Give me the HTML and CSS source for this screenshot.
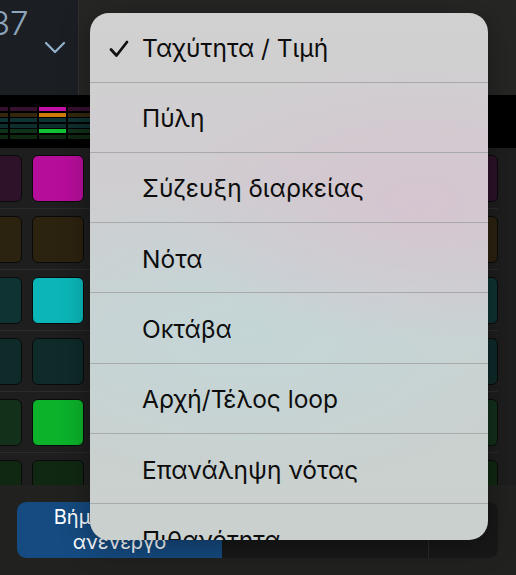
FILE: index.html
```html
<!DOCTYPE html>
<html lang="el">
<head>
    <meta charset="UTF-8">
    <title>Step Sequencer</title>
    <link rel="stylesheet" href="styles.css">
</head>
<body>
    <div class="app">
        <div class="top-bar">
            <div class="pattern-panel">
                <span class="pattern-number">37</span>
                <svg class="chevron" width="22" height="13" viewBox="0 0 22 13">
                    <path d="M2 2 L11 11 L20 2" fill="none" stroke="#93b2cc" stroke-width="2.2" stroke-linecap="round" stroke-linejoin="round"/>
                </svg>
            </div>
            <div class="top-rest"></div>
        </div>

        <div class="overview">
            <div class="mini-row magenta"><i></i><i></i><i class="on"></i><i></i><i></i><i></i><i></i><i></i><i></i><i></i><i></i><i></i><i></i><i></i><i></i><i></i></div>
            <div class="mini-row orange"><i></i><i></i><i class="on"></i><i></i><i></i><i></i><i></i><i></i><i></i><i></i><i></i><i></i><i></i><i></i><i></i><i></i></div>
            <div class="mini-row cyan"><i></i><i></i><i></i><i></i><i></i><i></i><i></i><i></i><i></i><i></i><i></i><i></i><i></i><i></i><i></i><i></i></div>
            <div class="mini-row teal"><i></i><i></i><i></i><i></i><i></i><i></i><i></i><i></i><i></i><i></i><i></i><i></i><i></i><i></i><i></i><i></i></div>
            <div class="mini-row green"><i></i><i></i><i class="on"></i><i></i><i></i><i></i><i></i><i></i><i></i><i></i><i></i><i></i><i></i><i></i><i></i><i></i></div>
            <div class="mini-row forest"><i></i><i></i><i></i><i></i><i></i><i></i><i></i><i></i><i></i><i></i><i></i><i></i><i></i><i></i><i></i><i></i></div>
        </div>

        <div class="pad-grid">
            <div class="pad-row magenta"><b></b><b class="on"></b><b></b><b></b><b></b><b></b><b></b><b></b></div>
            <div class="pad-row orange"><b></b><b></b><b></b><b></b><b></b><b></b><b></b><b></b></div>
            <div class="pad-row cyan"><b></b><b class="on"></b><b></b><b></b><b></b><b></b><b></b><b></b></div>
            <div class="pad-row teal"><b></b><b></b><b></b><b></b><b></b><b></b><b></b><b></b></div>
            <div class="pad-row green"><b></b><b class="on"></b><b></b><b></b><b></b><b></b><b></b><b></b></div>
            <div class="pad-row forest"><b></b><b></b><b></b><b></b><b></b><b></b><b></b><b></b></div>
        </div>

        <div class="bottom-bar">
            <div class="segmented">
                <div class="segment active">Βήμα ενεργό/<br>ανενεργό</div>
                <div class="segment"></div>
                <div class="segment small"></div>
            </div>
        </div>
    </div>

    <div class="menu">
        <div class="menu-item">
            <svg class="check" width="20" height="18" viewBox="0 0 20 18">
                <path d="M2 9.5 L7.5 15.5 L18 2" fill="none" stroke="#111" stroke-width="2.8" stroke-linecap="round" stroke-linejoin="round"/>
            </svg>
            <span>Ταχύτητα / Τιμή</span>
        </div>
        <div class="menu-item"><span>Πύλη</span></div>
        <div class="menu-item"><span>Σύζευξη διαρκείας</span></div>
        <div class="menu-item"><span>Νότα</span></div>
        <div class="menu-item"><span>Οκτάβα</span></div>
        <div class="menu-item"><span>Αρχή/Τέλος loop</span></div>
        <div class="menu-item"><span>Επανάληψη νότας</span></div>
        <div class="menu-item"><span>Πιθανότητα</span></div>
    </div>
</body>
</html>
```

FILE: styles.css
```css
* {
    box-sizing: border-box;
    margin: 0;
    padding: 0;
}

body {
    font-family: Inter, "Noto Sans", sans-serif;
    background-color: #222321;
    width: 516px;
    height: 575px;
    overflow: hidden;
    position: relative;
}

.app {
    display: flex;
    flex-direction: column;
    height: 100%;
}

/* Top bar */
.top-bar {
    height: 95px;
    display: flex;
}

.pattern-panel {
    width: 78px;
    background-color: #1b1f23;
    position: relative;
    overflow: hidden;
}

.pattern-number {
    position: absolute;
    left: -10px;
    top: 3px;
    font-size: 33px;
    font-weight: 300;
    color: #8ea6bd;
}

.chevron {
    position: absolute;
    left: 44px;
    top: 41px;
}

.top-rest {
    flex: 1;
    background-color: #262725;
    border-left: 1px solid #2e2f2e;
}

/* Step overview strip */
.overview {
    height: 53px;
    background-color: #000;
    padding-top: 12px;
    display: flex;
    flex-direction: column;
    gap: 1.5px;
}

.mini-row {
    display: flex;
    gap: 2px;
    margin-left: -19px;
    height: 4px;
}

.mini-row i {
    width: 27px;
    flex: none;
}

.mini-row.magenta i { background-color: #35102f; }
.mini-row.magenta i.on { background-color: #c210a6; }
.mini-row.orange i { background-color: #33270f; }
.mini-row.orange i.on { background-color: #cf7b08; }
.mini-row.cyan i { background-color: #0f3333; }
.mini-row.teal i { background-color: #0f2f2f; }
.mini-row.green i { background-color: #10321a; }
.mini-row.green i.on { background-color: #10c232; }
.mini-row.forest i { background-color: #0e2812; }

/* Pads */
.pad-grid {
    height: 337px;
    background-color: #1d1e1d;
    overflow: hidden;
}

.pad-row {
    height: 61px;
    padding-top: 7px;
    border-bottom: 1px solid #2a2b2a;
    display: grid;
    grid-template-columns: 52px 52px repeat(5, 1fr) 52px;
    column-gap: 10px;
    margin-left: -30px;
    width: 528px;
}

.pad-row b {
    height: 47px;
    border-radius: 6px;
    border: 1.5px solid #0a0a0a;
}

.pad-row.magenta b { background-color: #2d1229; }
.pad-row.magenta b.on { background-color: #b70d9b; }
.pad-row.orange b { background-color: #2c2210; }
.pad-row.cyan b { background-color: #0f3333; }
.pad-row.cyan b.on { background-color: #0bb6b8; }
.pad-row.teal b { background-color: #0e2a29; }
.pad-row.green b { background-color: #12301a; }
.pad-row.green b.on { background-color: #0bb22a; }
.pad-row.forest b { background-color: #102812; }

/* Bottom bar */
.bottom-bar {
    flex: 1;
    background-color: #212220;
    padding: 17px 18px 0 17px;
}

.segmented {
    height: 56px;
    display: flex;
    background-color: #171817;
    border-radius: 9px;
    overflow: hidden;
}

.segment {
    flex: 1;
    display: flex;
    align-items: center;
    justify-content: center;
    text-align: center;
    color: #fff;
    font-size: 20px;
    line-height: 25px;
}

.segment.active {
    flex: none;
    width: 205px;
    background-color: #154b80;
    white-space: nowrap;
}

.segment.small {
    flex: none;
    width: 70px;
    border-left: 1px solid #2a2b2a;
}

/* Popup menu */
.menu {
    position: absolute;
    left: 90px;
    top: 13px;
    width: 398px;
    height: 527px;
    border-radius: 19px;
    overflow: hidden;
    background:
        radial-gradient(ellipse 260px 140px at 330px 190px, rgba(214, 196, 208, 0.9), rgba(214, 196, 208, 0) 100%),
        radial-gradient(ellipse 280px 160px at 160px 320px, rgba(196, 214, 216, 0.9), rgba(196, 214, 216, 0) 100%),
        linear-gradient(to bottom, #d1d1d1 0%, #d0cdd0 30%, #c9d2d2 60%, #cad0cd 100%);
    box-shadow: 0 6px 30px rgba(0, 0, 0, 0.35);
}

.menu-item {
    height: 70.33px;
    border-bottom: 1px solid #a8aaa9;
    display: flex;
    align-items: center;
    padding-left: 52px;
    padding-top: 2px;
    position: relative;
    font-size: 24.5px;
    color: #0d0d0d;
}

.menu-item:first-child {
    height: 69.5px;
}

.check {
    position: absolute;
    left: 19px;
    top: 27px;
}
```
